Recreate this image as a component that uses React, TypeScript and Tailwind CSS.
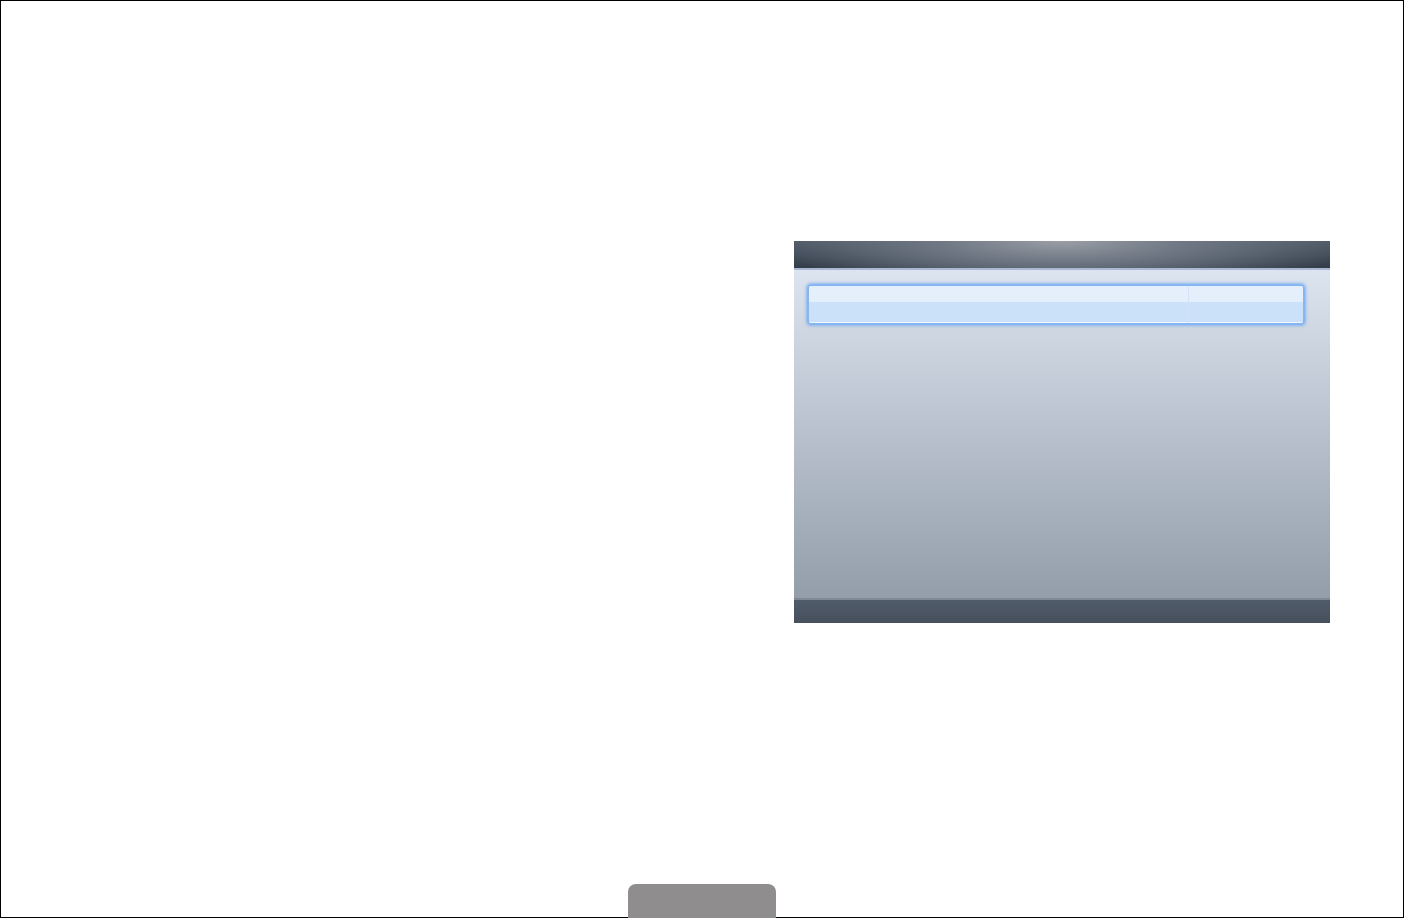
import React from 'react';

const ListPanel = () => {
    return (
        <div className="w-[536px] h-[382px] flex flex-col">
            {/* header bar with soft highlight in the middle */}
            <div className="h-[27px] bg-[radial-gradient(ellipse_300px_50px_at_50%_0%,#9a9ea6_0%,#6f7884_40%,transparent_100%),linear-gradient(to_bottom,#4e5866,#333d4a)]"></div>
            <div className="h-[2px] bg-[#aab8d2]"></div>
            <div className="flex-1 flex flex-col bg-gradient-to-b from-[#dce4ef] to-[#949eab] pt-[14px] px-[13px]">
                <div className="w-[498px] h-[41px] rounded-[4px] border-2 border-[#86b6f2] shadow-[0_0_3px_1px_rgba(110,165,240,0.7)] flex overflow-hidden">
                    <div className="w-[379px] flex flex-col">
                        <div className="h-[16px] bg-[#e5effc]"></div>
                        <div className="flex-1 bg-[#cbe0f9] border-b border-[#f2f7fe]"></div>
                    </div>
                    <div className="w-px bg-[#d2e3f9]"></div>
                    <div className="flex-1 flex flex-col">
                        <div className="h-[16px] bg-[#e5effc]"></div>
                        <div className="flex-1 bg-[#cbe0f9] border-b border-[#f2f7fe]"></div>
                    </div>
                </div>
            </div>
            <div className="h-[2px] bg-[#7f8894]"></div>
            <div className="h-[23px] bg-gradient-to-b from-[#505c6b] to-[#47505c]"></div>
        </div>
    );
};

export default function App() {
    return (
        <div className="w-[1404px] h-[918px] bg-white shadow-[inset_0_0_0_1px_#000] flex flex-col overflow-hidden">
            <div className="pt-[241px] pl-[794px]">
                <ListPanel />
            </div>
            <div className="mt-auto pl-[628px]">
                <div className="w-[148px] h-[34px] rounded-t-[8px] bg-[#8f8d8e]"></div>
            </div>
        </div>
    );
}
